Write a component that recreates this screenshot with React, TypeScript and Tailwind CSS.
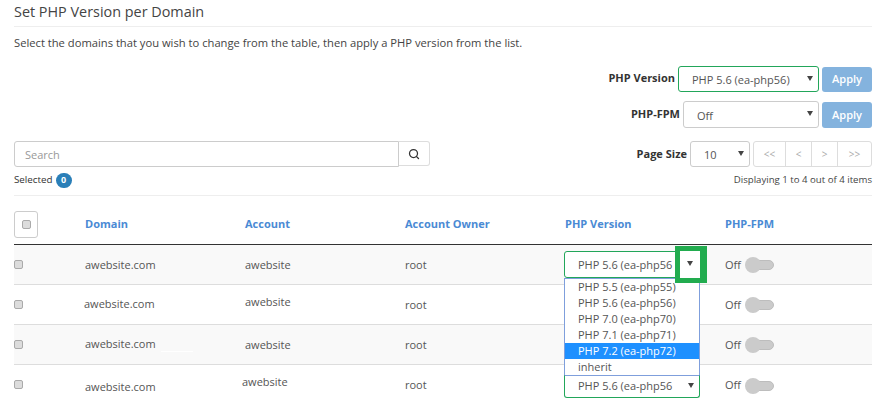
import { Search } from 'lucide-react';

const rows = [
  { checkClass: 'pb-[1px]', domainClass: 'pt-[1px]', accountClass: 'pt-[1px]', ownerClass: 'pt-[1px]', fpmClass: 'pt-[1px]', select: true },
  { checkClass: 'pb-[1px]', domainClass: '-ml-[1px]', accountClass: 'pb-[4px]', ownerClass: 'pt-[1px]', fpmClass: 'pt-[1px]', select: false },
  { checkClass: 'pb-[1px]', domainClass: '', accountClass: 'pt-[1px]', ownerClass: 'pt-[1px]', fpmClass: 'pt-[1px]', select: false },
  { checkClass: 'pb-[5px]', domainClass: 'pt-[1px]', accountClass: 'pb-[8px] -ml-[3px]', ownerClass: 'pb-[2px]', fpmClass: 'pb-[2px]', select: false },
];

const options = ['PHP 5.5 (ea-php55)', 'PHP 5.6 (ea-php56)', 'PHP 7.0 (ea-php70)', 'PHP 7.1 (ea-php71)', 'PHP 7.2 (ea-php72)', 'inherit'];

function Arrow() {
  return (
    <svg width="6" height="5" viewBox="0 0 6 5" className="shrink-0 mb-[2px]">
      <path d="M0 0h6L3 5z" fill="#444" />
    </svg>
  );
}

function SelectBox({ label, className, labelClass = 'pt-[1px]' }: { label: string; className: string; labelClass?: string }) {
  return (
    <div className={`flex items-center justify-between bg-white rounded-[3px] border text-[#555] text-[11px] ${className}`}>
      <span className={labelClass}>{label}</span>
      <Arrow />
    </div>
  );
}

function ApplyButton({ className }: { className: string }) {
  return (
    <div className={`w-[50px] self-end flex items-center justify-center rounded-[3px] bg-[#84b3de] text-white text-[11px] font-semibold ${className}`}>
      Apply
    </div>
  );
}

function Toggle() {
  return (
    <div className="flex items-center w-[29px] h-4">
      <div className="w-4 h-4 rounded-full bg-[#cbcbcb] shrink-0 z-10" />
      <div className="w-[18px] h-[10px] -ml-[5px] rounded-r-full bg-[#cbcbcb] border border-[#bdbdbd]" />
    </div>
  );
}

function Checkbox() {
  return <div className="w-[9px] h-[9px] rounded-[2px] bg-[#dcdcdc] border border-[#aaa]" />;
}

export default function App() {
  return (
    <div className="w-[878px] h-[407px] overflow-hidden bg-white pl-[14px] pr-[6px] text-[#555] text-[11px] font-['Open_Sans',sans-serif]">
      <div className="h-[27px] flex items-end pb-[4px] border-b border-[#eee] text-[14.4px] leading-5 text-[#444]">
        Set PHP Version per Domain
      </div>
      <p className="mt-[9px] h-[14px] leading-[14px] text-[11.2px] text-[#444]">
        Select the domains that you wish to change from the table, then apply a PHP version from the list.
      </p>

      <div className="mt-[16px] flex justify-end items-center gap-[3px] h-[26px]">
        <span className="font-bold text-[#333] text-[11px] pb-[1px]">PHP Version</span>
        <SelectBox label="PHP 5.6 (ea-php56)" labelClass="pt-[3px]" className="w-[141px] h-[26px] border-[#22a65a] pl-[13px] pr-[5px]" />
        <ApplyButton className="h-[25px]" />
      </div>
      <div className="mt-[9px] flex justify-end items-center gap-[3px] h-[27px]">
        <span className="font-bold text-[#333] text-[11px] pb-[1px]">PHP-FPM</span>
        <SelectBox label="Off" labelClass="pt-[3px]" className="w-[136px] h-[27px] border-[#ccc] pl-[13px] pr-[5px]" />
        <ApplyButton className="h-[26px]" />
      </div>

      <div className="mt-[13px] flex justify-between h-[26px]">
        <div className="flex">
          <div className="w-[385px] h-[26px] flex items-center pl-[10px] pt-[2px] border border-[#ccc] rounded-l-[3px] text-[#999] text-[11px]">Search</div>
          <div className="w-[31px] h-[25px] flex items-center justify-center border border-l-0 border-[#ddd] rounded-r-[3px]">
            <Search size={12} strokeWidth={2.5} color="#333" />
          </div>
        </div>
        <div className="flex items-center">
          <span className="font-bold text-[#333] text-[11px] mr-[3px] pt-[1px]">Page Size</span>
          <SelectBox label="10" labelClass="pt-[3px]" className="w-[60px] h-[26px] border-[#ccc] pl-[13px] pr-[5px]" />
          <div className="ml-[3px] w-[119px] h-[26px] flex border border-[#ddd] rounded-[3px] text-[#aaa] text-[10px] bg-white">
            <div className="w-[32px] flex items-center justify-center border-r border-[#ddd]">&lt;&lt;</div>
            <div className="w-[26px] flex items-center justify-center border-r border-[#ddd]">&lt;</div>
            <div className="w-[26px] flex items-center justify-center border-r border-[#ddd]">&gt;</div>
            <div className="flex-1 flex items-center justify-center">&gt;&gt;</div>
          </div>
        </div>
      </div>

      <div className="mt-[5px] h-[16px] flex justify-between items-center text-[9.8px] text-[#333]">
        <div className="flex items-center gap-[3px]">
          <span>Selected</span>
          <span className="w-4 h-[15px] rounded-full bg-[#2a7fb8] text-white font-bold text-[9px] flex items-center justify-center">0</span>
        </div>
        <span className="text-[#444] text-[9.65px]">Displaying 1 to 4 out of 4 items</span>
      </div>

      <div className="mt-[7px] border-t border-[#eee] grid grid-cols-[71px_160px_160px_160px_160px_1fr] items-center h-[49px] pt-[15px] pb-[6px] font-bold text-[#4a8ad4] text-[11px]">
        <div className="w-6 h-[27px] border border-[#ccc] rounded-[3px] flex items-center justify-center">
          <Checkbox />
        </div>
        <div>Domain</div>
        <div>Account</div>
        <div>Account Owner</div>
        <div>PHP Version</div>
        <div>PHP-FPM</div>
      </div>

      <div className="relative border-t border-[#333]">
        {rows.map((row, i) => (
          <div
            key={i}
            className={`grid grid-cols-[71px_160px_160px_160px_160px_1fr] items-center ${i === 3 ? 'h-[43px] bg-white' : 'h-10 border-b border-[#ddd]'} ${i === 0 || i === 2 ? 'bg-[#f9f9f9]' : 'bg-white'}`}
          >
            <div className={row.checkClass}><Checkbox /></div>
            <div className={row.domainClass}>awebsite.com</div>
            <div className={row.accountClass}>awebsite</div>
            <div className={row.ownerClass}>root</div>
            <div>
              {row.select && (
                <SelectBox label="PHP 5.6 (ea-php56" className="-ml-[1px] w-[136px] h-[27px] border-[#22a65a] pl-[13px] pr-[5px]" />
              )}
            </div>
            <div className={`flex items-center gap-1 ${row.fpmClass}`}>
              <span>Off</span>
              <Toggle />
            </div>
          </div>
        ))}

        {/* open dropdown, overlays rows 2-4 */}
        <div className="absolute left-[550px] top-[33px] w-[136px]">
          <div className="border border-[#7f9fdc] bg-white text-[11px] leading-4 text-[#555]">
            {options.map((o) => (
              <div key={o} className={`pl-[13px] h-4 ${o.startsWith('PHP 7.2') ? 'bg-[#1e90ff] text-white' : ''}`}>{o}</div>
            ))}
          </div>
          <SelectBox label="PHP 5.6 (ea-php56" labelClass="" className="-mt-[1px] h-[23px] border-[#22a65a] border-t-[#7f9fdc] pl-[13px] pr-[5px] rounded-t-none" />
        </div>

        {/* green callout around the arrow */}
        <div className="absolute left-[661px] top-[1px] w-[32px] h-[37px] border-[5px] border-r-[7px] border-[#22ac4f] bg-white flex items-center justify-center">
          <Arrow />
        </div>

        {/* stray white line left in the screenshot */}
        <div className="absolute left-[147px] top-[106px] w-[32px] h-px bg-white" />
      </div>
    </div>
  );
}
